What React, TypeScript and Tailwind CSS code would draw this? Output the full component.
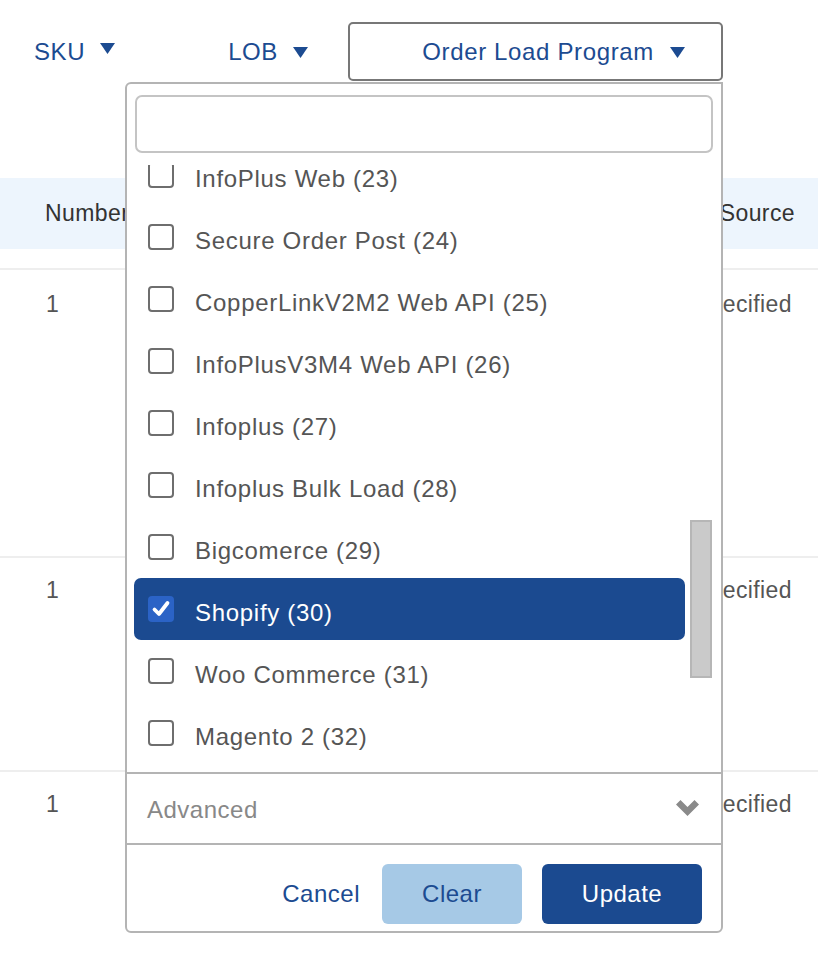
import React from "react";

const items = [
  { label: "InfoPlus Web (23)", checked: false },
  { label: "Secure Order Post (24)", checked: false },
  { label: "CopperLinkV2M2 Web API (25)", checked: false },
  { label: "InfoPlusV3M4 Web API (26)", checked: false },
  { label: "Infoplus (27)", checked: false },
  { label: "Infoplus Bulk Load (28)", checked: false },
  { label: "Bigcomerce (29)", checked: false },
  { label: "Shopify (30)", checked: true },
  { label: "Woo Commerce (31)", checked: false },
  { label: "Magento 2 (32)", checked: false },
];

function Caret({ className = "" }: { className?: string }) {
  return (
    <svg width="15" height="11" viewBox="0 0 15 11" className={className}>
      <polygon points="0,0 15,0 7.5,11" fill="#1c4b91" />
    </svg>
  );
}

function Checkbox({ checked }: { checked: boolean }) {
  if (checked) {
    return (
      <span className="w-[26px] h-[26px] rounded-[4px] bg-[#2b63c6] flex items-center justify-center shrink-0">
        <svg width="20" height="20" viewBox="0 0 20 20">
          <path d="M3.5 10.5 L8 15 L16.5 4" fill="none" stroke="#fff" strokeWidth="3.8" strokeLinecap="round" strokeLinejoin="round" />
        </svg>
      </span>
    );
  }
  return <span className="w-[26px] h-[26px] rounded-[4px] border-2 border-[#6e6e6e] bg-white shrink-0" />;
}

export default function App() {
  return (
    <div className="relative w-[818px] h-[970px] bg-white overflow-hidden font-['Liberation_Sans',Arial,sans-serif]">
      {/* Toolbar */}
      <div className="flex items-center pt-[22px] h-[81px]">
        <button className="ml-[34px] flex items-center gap-[15px] text-[24px] tracking-[0.6px] text-[#1c4b91]">
          SKU
          <Caret className="-mt-[6px]" />
        </button>
        <button className="ml-[113px] flex items-center gap-[15px] text-[24px] tracking-[0.6px] text-[#1c4b91]">
          LOB
          <Caret className="mt-[2px]" />
        </button>
        <button className="ml-[40px] w-[375px] h-[59px] border-2 border-[#777] rounded-[5px] flex items-center justify-end gap-[16px] pr-[36px] text-[24px] tracking-[0.65px] text-[#1c4b91]">
          Order Load Program
          <Caret className="mt-[2px]" />
        </button>
      </div>

      {/* Table behind */}
      <div className="mt-[97px]">
        <div className="h-[71px] bg-[#edf5fd] flex items-center justify-between pl-[45px] pr-[23px] text-[23px] tracking-[0.4px] text-[#333]">
          <span>Number</span>
          <span>Order Source</span>
        </div>
        <div className="mt-[19px] border-t-2 border-[#eeeeee] h-[288px] flex justify-between pl-[46px] pr-[26px] pt-[17px] text-[23px] tracking-[0.4px] text-[#555]">
          <span>1</span>
          <span>Unspecified</span>
        </div>
        <div className="border-t-2 border-[#eeeeee] h-[214px] flex justify-between pl-[46px] pr-[26px] pt-[15px] text-[23px] tracking-[0.4px] text-[#555]">
          <span>1</span>
          <span>Unspecified</span>
        </div>
        <div className="border-t-2 border-[#eeeeee] h-[200px] flex justify-between pl-[46px] pr-[26px] pt-[15px] text-[23px] tracking-[0.4px] text-[#555]">
          <span>1</span>
          <span>Unspecified</span>
        </div>
      </div>

      {/* Dropdown panel */}
      <div className="absolute left-[125px] top-[82px] w-[598px] h-[851px] bg-white border-2 border-[#b4b4b4] rounded-[6px] rounded-tr-none flex flex-col">
        <div className="px-[8px] pt-[11px]">
          <input className="w-full h-[58px] border-2 border-[#c4c4c4] rounded-[7px] outline-none px-3 text-[22px]" />
        </div>

        <div className="relative mt-[12px] h-[607px] overflow-hidden">
          <div className="-mt-[21px] pl-[7px] w-[558px]">
            {items.map((it) => (
              <div
                key={it.label}
                className={
                  it.checked
                    ? "h-[62px] flex items-center gap-[21px] pl-[14px] rounded-[7px] bg-[#1b4a90] text-white"
                    : "h-[62px] flex items-center gap-[21px] pl-[14px] text-[#555]"
                }
              >
                <Checkbox checked={it.checked} />
                <span className="mt-[7px] text-[24px] tracking-[0.7px]">{it.label}</span>
              </div>
            ))}
          </div>
          {/* scrollbar */}
          <div className="absolute left-[563px] top-[355px] w-[22px] h-[158px] bg-[#cacaca] border-2 border-[#b6b6b6]" />
        </div>

        <div className="border-t-2 border-[#b4b4b4] h-[71px] flex items-center justify-between pl-[20px] pr-[22px]">
          <span className="mt-[2px] text-[24px] tracking-[0.5px] text-[#888]">Advanced</span>
          <svg width="23" height="17" viewBox="0 0 23 17">
            <polygon points="0,4.5 4.5,0 11.5,7 18.5,0 23,4.5 11.5,16" fill="#8a8a8a" />
          </svg>
        </div>

        <div className="border-t-2 border-[#b4b4b4] flex-1 flex items-start justify-end pt-[19px] pr-[19px]">
          <button className="h-[60px] flex items-center mr-[22px] text-[24px] tracking-[0.5px] text-[#1c4b91]">
            Cancel
          </button>
          <button className="w-[140px] h-[60px] rounded-[6px] bg-[#a6c9e6] text-[24px] tracking-[0.5px] text-[#1c4b91]">
            Clear
          </button>
          <button className="ml-[20px] w-[160px] h-[60px] rounded-[6px] bg-[#1b4a90] text-[24px] tracking-[0.5px] text-white">
            Update
          </button>
        </div>
      </div>
    </div>
  );
}
